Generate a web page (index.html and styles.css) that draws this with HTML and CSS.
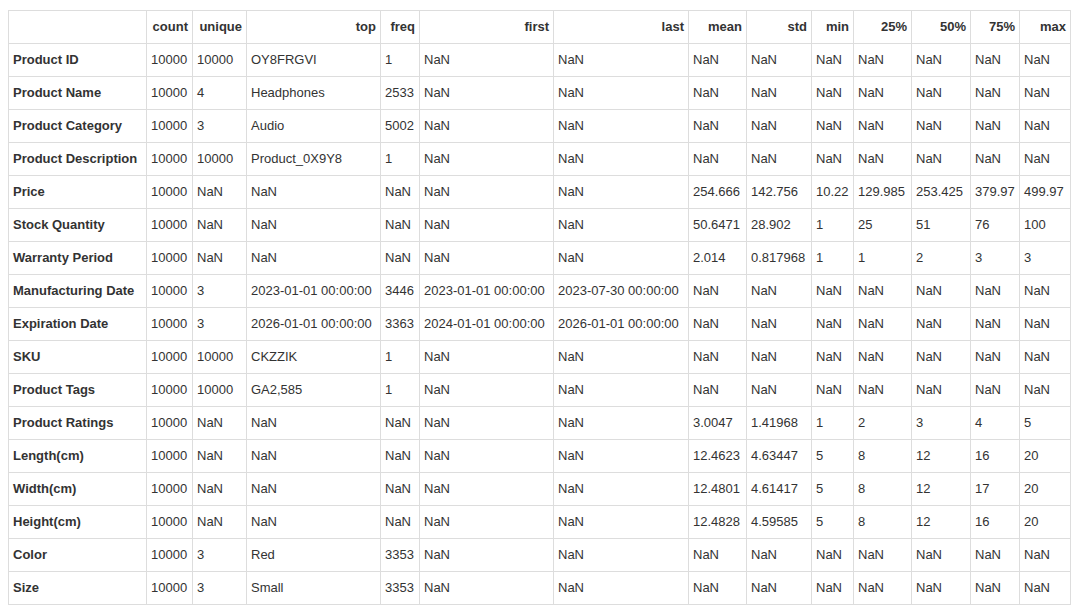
FILE: index.html
```html
<!DOCTYPE html>
<html>
<head>
<meta charset="utf-8">
<link rel="stylesheet" href="styles.css">
</head>
<body>
<table class="df">
<colgroup>
<col class="c0"><col class="c1"><col class="c2"><col class="c3"><col class="c4"><col class="c5"><col class="c6"><col class="c7"><col class="c8"><col class="c9"><col class="c10"><col class="c11"><col class="c12"><col class="c13">
</colgroup>
<thead>
<tr><th></th><th>count</th><th>unique</th><th>top</th><th>freq</th><th>first</th><th>last</th><th>mean</th><th>std</th><th>min</th><th>25%</th><th>50%</th><th>75%</th><th>max</th></tr>
</thead>
<tbody>
<tr><th>Product ID</th><td>10000</td><td>10000</td><td>OY8FRGVI</td><td>1</td><td>NaN</td><td>NaN</td><td>NaN</td><td>NaN</td><td>NaN</td><td>NaN</td><td>NaN</td><td>NaN</td><td>NaN</td></tr>
<tr><th>Product Name</th><td>10000</td><td>4</td><td>Headphones</td><td>2533</td><td>NaN</td><td>NaN</td><td>NaN</td><td>NaN</td><td>NaN</td><td>NaN</td><td>NaN</td><td>NaN</td><td>NaN</td></tr>
<tr><th>Product Category</th><td>10000</td><td>3</td><td>Audio</td><td>5002</td><td>NaN</td><td>NaN</td><td>NaN</td><td>NaN</td><td>NaN</td><td>NaN</td><td>NaN</td><td>NaN</td><td>NaN</td></tr>
<tr><th>Product Description</th><td>10000</td><td>10000</td><td>Product_0X9Y8</td><td>1</td><td>NaN</td><td>NaN</td><td>NaN</td><td>NaN</td><td>NaN</td><td>NaN</td><td>NaN</td><td>NaN</td><td>NaN</td></tr>
<tr><th>Price</th><td>10000</td><td>NaN</td><td>NaN</td><td>NaN</td><td>NaN</td><td>NaN</td><td>254.666</td><td>142.756</td><td>10.22</td><td>129.985</td><td>253.425</td><td>379.97</td><td>499.97</td></tr>
<tr><th>Stock Quantity</th><td>10000</td><td>NaN</td><td>NaN</td><td>NaN</td><td>NaN</td><td>NaN</td><td>50.6471</td><td>28.902</td><td>1</td><td>25</td><td>51</td><td>76</td><td>100</td></tr>
<tr><th>Warranty Period</th><td>10000</td><td>NaN</td><td>NaN</td><td>NaN</td><td>NaN</td><td>NaN</td><td>2.014</td><td>0.817968</td><td>1</td><td>1</td><td>2</td><td>3</td><td>3</td></tr>
<tr><th>Manufacturing Date</th><td>10000</td><td>3</td><td>2023-01-01 00:00:00</td><td>3446</td><td>2023-01-01 00:00:00</td><td>2023-07-30 00:00:00</td><td>NaN</td><td>NaN</td><td>NaN</td><td>NaN</td><td>NaN</td><td>NaN</td><td>NaN</td></tr>
<tr><th>Expiration Date</th><td>10000</td><td>3</td><td>2026-01-01 00:00:00</td><td>3363</td><td>2024-01-01 00:00:00</td><td>2026-01-01 00:00:00</td><td>NaN</td><td>NaN</td><td>NaN</td><td>NaN</td><td>NaN</td><td>NaN</td><td>NaN</td></tr>
<tr><th>SKU</th><td>10000</td><td>10000</td><td>CKZZIK</td><td>1</td><td>NaN</td><td>NaN</td><td>NaN</td><td>NaN</td><td>NaN</td><td>NaN</td><td>NaN</td><td>NaN</td><td>NaN</td></tr>
<tr><th>Product Tags</th><td>10000</td><td>10000</td><td>GA2,585</td><td>1</td><td>NaN</td><td>NaN</td><td>NaN</td><td>NaN</td><td>NaN</td><td>NaN</td><td>NaN</td><td>NaN</td><td>NaN</td></tr>
<tr><th>Product Ratings</th><td>10000</td><td>NaN</td><td>NaN</td><td>NaN</td><td>NaN</td><td>NaN</td><td>3.0047</td><td>1.41968</td><td>1</td><td>2</td><td>3</td><td>4</td><td>5</td></tr>
<tr><th>Length(cm)</th><td>10000</td><td>NaN</td><td>NaN</td><td>NaN</td><td>NaN</td><td>NaN</td><td>12.4623</td><td>4.63447</td><td>5</td><td>8</td><td>12</td><td>16</td><td>20</td></tr>
<tr><th>Width(cm)</th><td>10000</td><td>NaN</td><td>NaN</td><td>NaN</td><td>NaN</td><td>NaN</td><td>12.4801</td><td>4.61417</td><td>5</td><td>8</td><td>12</td><td>17</td><td>20</td></tr>
<tr><th>Height(cm)</th><td>10000</td><td>NaN</td><td>NaN</td><td>NaN</td><td>NaN</td><td>NaN</td><td>12.4828</td><td>4.59585</td><td>5</td><td>8</td><td>12</td><td>16</td><td>20</td></tr>
<tr><th>Color</th><td>10000</td><td>3</td><td>Red</td><td>3353</td><td>NaN</td><td>NaN</td><td>NaN</td><td>NaN</td><td>NaN</td><td>NaN</td><td>NaN</td><td>NaN</td><td>NaN</td></tr>
<tr><th>Size</th><td>10000</td><td>3</td><td>Small</td><td>3353</td><td>NaN</td><td>NaN</td><td>NaN</td><td>NaN</td><td>NaN</td><td>NaN</td><td>NaN</td><td>NaN</td><td>NaN</td></tr>
</tbody>
</table>
</body>
</html>
```
FILE: styles.css
```css
html, body {
  margin: 0;
  background: #ffffff;
}
body {
  padding: 10px 8px 0 8px;
  font-family: "Liberation Sans", Arial, sans-serif;
  font-size: 13px;
  color: #333333;
}
.df {
  border-collapse: collapse;
  table-layout: fixed;
  width: 1063px;
}
.df th, .df td {
  box-sizing: border-box;
  border: 1px solid #dddddd;
  height: 33px;
  padding: 0 4px 1px 4px;
  white-space: nowrap;
  overflow: hidden;
  vertical-align: middle;
  text-align: left;
  font-weight: normal;
}
.df thead th {
  text-align: right;
  font-weight: bold;
}
.df tbody th {
  font-weight: bold;
}
.c0 { width: 138px; }
.c1 { width: 46px; }
.c2 { width: 54px; }
.c3 { width: 134px; }
.c4 { width: 39px; }
.c5 { width: 134px; }
.c6 { width: 135px; }
.c7 { width: 58px; }
.c8 { width: 65px; }
.c9 { width: 42px; }
.c10 { width: 58px; }
.c11 { width: 59px; }
.c12 { width: 49px; }
.c13 { width: 51px; }
```
